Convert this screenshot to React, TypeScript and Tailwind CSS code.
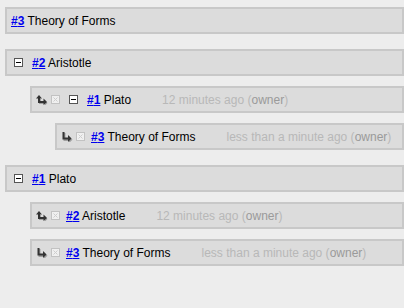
import React from 'react';

type Item = {
  id: number;
  title: string;
  time?: string;
  arrow?: 'both' | 'down';
  collapsible?: boolean;
  children?: Item[];
};

const tree: Item[] = [
  { id: 3, title: 'Theory of Forms' },
  {
    id: 2,
    title: 'Aristotle',
    collapsible: true,
    children: [
      {
        id: 1,
        title: 'Plato',
        time: '12 minutes ago',
        arrow: 'both',
        collapsible: true,
        children: [{ id: 3, title: 'Theory of Forms', time: 'less than a minute ago', arrow: 'down' }],
      },
    ],
  },
  {
    id: 1,
    title: 'Plato',
    collapsible: true,
    children: [
      { id: 2, title: 'Aristotle', time: '12 minutes ago', arrow: 'both' },
      { id: 3, title: 'Theory of Forms', time: 'less than a minute ago', arrow: 'down' },
    ],
  },
];

function Arrow({ kind }: { kind: 'both' | 'down' }) {
  if (kind === 'down') {
    return (
      <svg width="12" height="10" viewBox="0 0 12 10" className="shrink-0">
        <g transform="translate(1 1)" fill="#a0a0a0">
          <path d="M1.5 0 H3.5 V5.5 H7.5 V8 H1.5 Z" />
          <path d="M7 3 L10.5 6.75 L7 10 Z" />
        </g>
        <path d="M1.5 0 H3.5 V5.5 H7.5 V7.5 H1.5 Z" fill="#333" />
        <path d="M7 3 L10.5 6.5 L7 10 Z" fill="#333" />
      </svg>
    );
  }
  return (
    <svg width="12" height="10" viewBox="0 0 12 10" className="shrink-0">
      <g transform="translate(1 1)" fill="#a0a0a0">
        <path d="M2 3 H4 V6 H8 V8 H2 Z" />
        <path d="M7.5 3.5 L10.5 7 L7.5 10 Z" />
      </g>
      <path d="M2 3 H4 V6 H8 V8 H2 Z" fill="#333" />
      <path d="M0 3.5 L3 0 L6 3.5 Z" fill="#333" />
      <path d="M7.5 3.5 L11 7 L7.5 10 Z" fill="#333" />
    </svg>
  );
}

function Broken() {
  return (
    <svg width="9" height="9" viewBox="0 0 9 9" className="ml-[3px] shrink-0">
      <rect x="0.5" y="0.5" width="8" height="8" fill="#f0f0f0" stroke="#c2c2c2" />
      <path d="M2.5 2.5 L6.5 6.5 M6.5 2.5 L2.5 6.5" stroke="#cdcdcd" strokeWidth="1" />
    </svg>
  );
}

function Minus({ first }: { first?: boolean }) {
  return (
    <span
      className={`flex h-[9px] w-[9px] shrink-0 items-center justify-center border border-[#555] bg-white ${
        first ? 'ml-[3px]' : 'ml-[9px]'
      }`}
    >
      <span className="h-px w-[5px] bg-black" />
    </span>
  );
}

function Row({ item }: { item: Item }) {
  return (
    <div className="flex h-[27px] items-center border-2 border-[#c8c8c8] bg-[#dcdcdc] pl-1">
      {item.arrow && <Arrow kind={item.arrow} />}
      {item.arrow && <Broken />}
      {item.collapsible && <Minus first={!item.arrow} />}
      <span className={item.collapsible ? 'ml-[9px]' : item.arrow ? 'ml-[6px]' : ''}>
        <a href="#" className="font-bold text-[#0000ee] underline">
          #{item.id}
        </a>{' '}
        <span className="text-black">{item.title}</span>
      </span>
      {item.time && (
        <span className="ml-[31px] text-[#b8b8b8]">
          {item.time} (<span className="text-[#9a9a9a]">owner</span>)
        </span>
      )}
    </div>
  );
}

function Branch({ item, top }: { item: Item; top?: boolean }) {
  return (
    <div className={top ? '' : 'mt-[10px]'}>
      <Row item={item} />
      {item.children && (
        <div className="ml-[25px]">
          {item.children.map((c, i) => (
            <Branch key={i} item={c} />
          ))}
        </div>
      )}
    </div>
  );
}

export default function App() {
  return (
    <div className="min-h-screen bg-[#ededed] pl-[5px] pt-[7px] font-['Liberation_Sans',Arial,sans-serif] text-[12px] leading-none">
      {tree.map((item, i) => (
        <div key={i} className={i > 0 ? 'mt-[15px]' : ''}>
          <Branch item={item} top />
        </div>
      ))}
    </div>
  );
}
